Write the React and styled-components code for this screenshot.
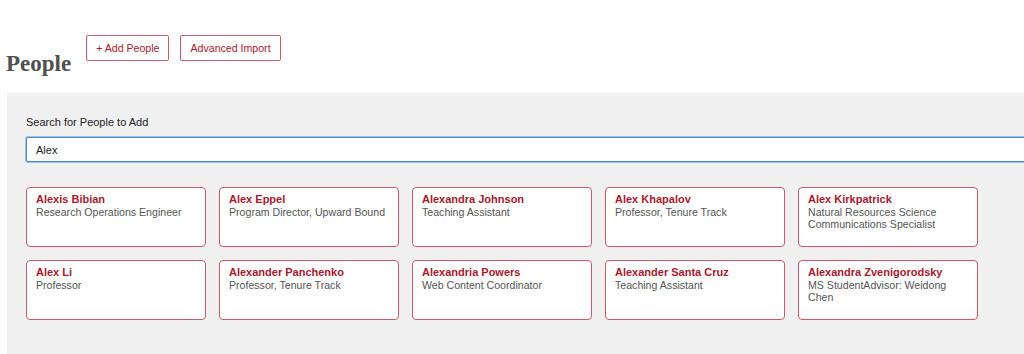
import styled, { createGlobalStyle } from 'styled-components'

const Global = createGlobalStyle`
html, body {
  margin: 0;
  overflow: hidden;
  background: #fff;
}
body {
  font-family: "Liberation Sans", Arial, sans-serif;
}
`
const Page = styled.div`
width: 1024px;
height: 354px;
overflow: hidden;
padding: 35px 0 0 7px;
box-sizing: border-box;
`
const Header = styled.div`
display: flex;
align-items: flex-start;
gap: 11px;
`
const Title = styled.h1`
font-family: "Liberation Serif", "Times New Roman", serif;
font-weight: bold;
font-size: 23px;
line-height: 26px;
color: #505050;
margin: 16px 4px 0 -1px;
`
const Action = styled.button`
height: 26px;
padding: 0 9px;
background: #fff;
border: 1px solid #c95a6d;
border-radius: 2px;
color: #a6192e;
font-family: "Liberation Sans", Arial, sans-serif;
font-size: 10.6px;
cursor: pointer;
`
const Panel = styled.div`
margin-top: 16px;
width: 1040px;
height: 280px;
background: #f0f0f0;
padding: 22px 19px;
box-sizing: border-box;
`
const Label = styled.label`
display: block;
font-size: 11px;
color: #1d2327;
line-height: 14px;
margin-bottom: 8px;
`
const Search = styled.input`
display: block;
width: 100%;
height: 25px;
box-sizing: border-box;
padding: 0 9px;
border: 1px solid #4f8ac9;
box-shadow: 0 0 0 1px #9fc0e3;
border-radius: 2px;
outline: none;
font-family: "Liberation Sans", Arial, sans-serif;
font-size: 11px;
color: #1d2327;
background: #fff;
`
const Grid = styled.div`
display: grid;
grid-template-columns: repeat(5, 180px);
gap: 13px;
margin-top: 25px;
`
const Card = styled.div`
height: 60px;
box-sizing: border-box;
background: #fff;
border: 1px solid #c95a6d;
border-radius: 4px;
padding: 5px 4px 4px 9px;
`
const Name = styled.div`
font-weight: bold;
font-size: 11px;
line-height: 13px;
color: #a6192e;
`
const Role = styled.div`
font-size: 10.6px;
line-height: 12px;
color: #555;
`

const people = [
    ['Alexis Bibian', 'Research Operations Engineer'],
    ['Alex Eppel', 'Program Director, Upward Bound'],
    ['Alexandra Johnson', 'Teaching Assistant'],
    ['Alex Khapalov', 'Professor, Tenure Track'],
    ['Alex Kirkpatrick', 'Natural Resources Science Communications Specialist'],
    ['Alex Li', 'Professor'],
    ['Alexander Panchenko', 'Professor, Tenure Track'],
    ['Alexandria Powers', 'Web Content Coordinator'],
    ['Alexander Santa Cruz', 'Teaching Assistant'],
    ['Alexandra Zvenigorodsky', 'MS StudentAdvisor: Weidong Chen'],
]

export default function App() {
    return (
        <Page>
            <Global />
            <Header>
                <Title>People</Title>
                <Action>+ Add People</Action>
                <Action>Advanced Import</Action>
            </Header>
            <Panel>
                <Label htmlFor="people-search">Search for People to Add</Label>
                <Search id="people-search" defaultValue="Alex" />
                <Grid>
                    {people.map(([name, role]) => (
                        <Card key={name}>
                            <Name>{name}</Name>
                            <Role>{role}</Role>
                        </Card>
                    ))}
                </Grid>
            </Panel>
        </Page>
    )
}
